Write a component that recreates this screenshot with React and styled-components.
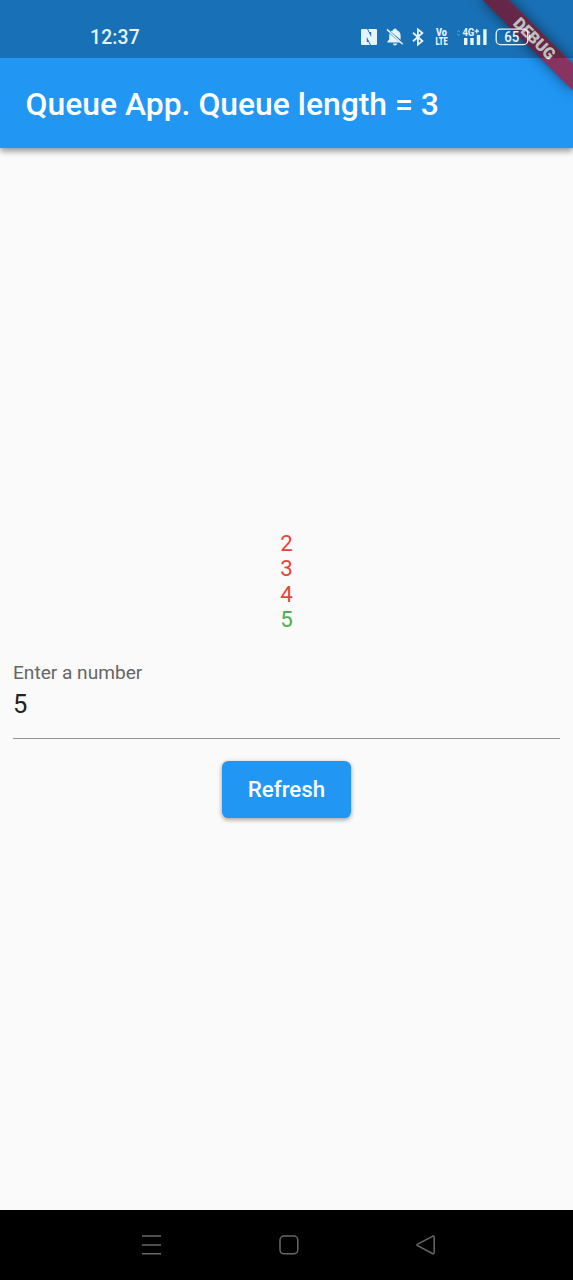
import React from 'react';
import styled, { createGlobalStyle } from 'styled-components';

const GlobalStyle = createGlobalStyle`
  *, *::before, *::after { box-sizing: border-box; }
  body { margin: 0; background: #fafafa; font-family: Roboto, sans-serif; }
`;

const Screen = styled.div`
  position: relative;
  display: flex;
  flex-direction: column;
  width: 573px;
  height: 1280px;
  overflow: hidden;
  background: #fafafa;
`;

const Header = styled.header`
  flex: none;
  background: #2196f3;
  box-shadow: 0 3px 6px rgba(0, 0, 0, 0.22), 0 3px 6px rgba(0, 0, 0, 0.22);
`;

/* The system bar is a translucent scrim above the app, debug banner included. */
const StatusBar = styled.div`
  position: relative;
  z-index: 2;
  display: flex;
  align-items: center;
  justify-content: space-between;
  height: 58px;
  padding: 16px 42px 0 90px;
  background: rgba(0, 0, 0, 0.25);
  color: #e6f5fd;
`;

const Clock = styled.time`
  padding-top: 2px;
  font-family: Roboto, sans-serif;
  font-size: 19.3px;
  font-weight: 500;
  line-height: 22px;
  letter-spacing: 0.2px;
`;

const StatusIcons = styled.div`
  display: flex;
  align-items: center;
`;

const Glyph = styled.svg`
  display: block;
  flex: none;
  margin-left: ${(p) => p.$gap || 0}px;
  overflow: visible;
  fill: currentColor;
`;

const GlyphText = styled.text`
  font-family: Roboto, sans-serif;
  font-size: ${(p) => p.$size}px;
  font-weight: ${(p) => p.$weight || 700};
`;

const TitleBar = styled.div`
  display: flex;
  align-items: center;
  height: 89.5px;
  padding: 2px 25.6px 0;
`;

const Title = styled.h1`
  margin: 0;
  color: #fff;
  font-size: 31.85px;
  font-weight: 500;
  line-height: 38px;
  white-space: nowrap;
`;

const Content = styled.main`
  flex: 1;
  display: flex;
  flex-direction: column;
  align-items: center;
  justify-content: center;
  padding: 0 13px 9px;
`;

const QueueList = styled.ul`
  margin: 0;
  padding: 0;
  list-style: none;
  text-align: center;
`;

const QueueItem = styled.li`
  color: ${(p) => (p.$latest ? '#4caf50' : '#e5443a')};
  font-size: 22.3px;
  line-height: 25.5px;
`;

const Field = styled.label`
  display: flex;
  flex-direction: column;
  width: 100%;
  height: 88px;
  margin-top: 18px;
  padding-top: 10px;
  border-bottom: 1.5px solid #949494;
`;

const FieldLabel = styled.span`
  color: #666;
  font-size: 19.1px;
  line-height: 23px;
`;

const FieldInput = styled.input`
  width: 100%;
  height: 30px;
  margin-top: 5px;
  padding: 0;
  border: 0;
  outline: 0;
  background: transparent;
  color: #212121;
  font: 400 25.5px/30px Roboto, sans-serif;
`;

const RefreshButton = styled.button`
  width: 129px;
  height: 57px;
  margin-top: 22px;
  padding: 0;
  border: 0;
  border-radius: 6.4px;
  background: #2196f3;
  color: #fff;
  box-shadow: 0 2px 4px rgba(0, 0, 0, 0.25), 0 1px 5px rgba(0, 0, 0, 0.15);
  font: 500 22.3px/26px Roboto, sans-serif;
`;

const NavBar = styled.nav`
  flex: none;
  display: flex;
  align-items: center;
  justify-content: space-between;
  height: 70px;
  padding: 0 137px 0 141px;
  background: #000;
`;

const NavGlyph = styled.svg`
  display: block;
  fill: none;
  stroke: #686868;
  stroke-width: 1.5;
  stroke-linejoin: round;
`;

const BannerCorner = styled.div`
  position: absolute;
  z-index: 1;
  top: 0;
  right: 0;
  width: 150px;
  height: 150px;
  overflow: hidden;
  pointer-events: none;
`;

const Banner = styled.div`
  position: absolute;
  top: 44.6px;
  left: 86.3px;
  width: 127.4px;
  height: 19.1px;
  transform: rotate(45deg);
  transform-origin: 63.7px -44.6px;
  background: rgba(172, 18, 45, 0.74);
  box-shadow: 0 0 13px rgba(0, 0, 0, 0.5);
  color: #fff;
  font-size: 16.2px;
  font-weight: 900;
  line-height: 19.1px;
  text-align: center;
`;

const numbers = [2, 3, 4, 5];

function StatusGlyphs() {
  return (
    <StatusIcons>
      <Glyph width="16" height="16" viewBox="0 0 16 16">
        <path
          fillRule="evenodd"
          d="M1 0H6L10.2 8V3H8.4L7.2 0H15Q16 0 16 1V15Q16 16 15 16H10L5.8 8V13H7.6L8.8 16H1Q0 16 0 15V1Q0 0 1 0z"
        />
      </Glyph>
      <Glyph $gap={9} width="18" height="18" viewBox="0 0 18 18">
        <path d="M7.2 2.2a1.8 1.8 0 0 1 3.6 0C13.3 3 14.6 5 14.6 7.5v4.3L4.7 3.6c.7-.7 1.5-1.1 2.5-1.4zM3.3 5.5 14 14.6H1.4v-1.2l1.8-1.9v-4zM7 15.5h4a2 2 0 0 1-4 0z" />
        <path d="M1 1.4 16.7 16.2" fill="none" stroke="currentColor" strokeWidth="1.5" />
      </Glyph>
      <Glyph $gap={8} width="12" height="18" viewBox="0 0 12 18">
        <path
          d="M1 4.8 10.4 13 5.9 16.6V1.4L10.4 5 1 13.2"
          fill="none"
          stroke="currentColor"
          strokeWidth="1.8"
        />
      </Glyph>
      <Glyph $gap={11} width="13" height="18" viewBox="0 0 13 18">
        <GlyphText x="1" y="8" $size={10.3} $weight={900} textLength="11" lengthAdjust="spacingAndGlyphs">Vo</GlyphText>
        <GlyphText x="0.5" y="16.8" $size={10.3} $weight={900} textLength="12" lengthAdjust="spacingAndGlyphs">LTE</GlyphText>
      </Glyph>
      <Glyph $gap={8} width="31" height="18" viewBox="0 0 31 18">
        <path d="M1 4.1 2.5 2.4 4 4.1M1 5.9l1.5 1.7L4 5.9" fill="none" stroke="currentColor" opacity=".3" />
        <GlyphText x="6.4" y="7.6" $size={10.8} textLength="12" lengthAdjust="spacingAndGlyphs">4G</GlyphText>
        <path d="M18.6 2.6h4.4v1.2h-4.4zM20.2 1h1.2v4.4h-1.2z" />
        <path d="M8 10h3.4v7H8zM14.3 10h3.4v7h-3.4zM20.8 7h3.4v10h-3.4zM27.2 1.2h3.4V17h-3.4z" />
      </Glyph>
      <Glyph $gap={8} width="36" height="18" viewBox="0 0 36 18">
        <rect x="1.2" y="1.2" width="31.6" height="15.4" rx="4.2" fill="none" stroke="currentColor" strokeWidth="1.3" />
        <path d="M34 6.3c1.8.6 1.8 4.6 0 5.2z" />
        <GlyphText x="9.2" y="13.9" $size={13.8} $weight={500} textLength="15" lengthAdjust="spacingAndGlyphs">65</GlyphText>
      </Glyph>
    </StatusIcons>
  );
}

export default function App() {
  return (
    <Screen>
      <GlobalStyle />
      <Header>
        <StatusBar>
          <Clock>12:37</Clock>
          <StatusGlyphs />
        </StatusBar>
        <TitleBar>
          <Title>Queue App. Queue length = 3</Title>
        </TitleBar>
      </Header>
      <Content>
        <QueueList>
          {numbers.map((n, i) => (
            <QueueItem key={n} $latest={i === numbers.length - 1}>{n}</QueueItem>
          ))}
        </QueueList>
        <Field>
          <FieldLabel>Enter a number</FieldLabel>
          <FieldInput defaultValue="5" inputMode="numeric" />
        </Field>
        <RefreshButton type="button">Refresh</RefreshButton>
      </Content>
      <NavBar>
        <NavGlyph width="21" height="22" viewBox="0 0 21 22">
          <path d="M1 2h19M1 11h19M1 19.7h19" />
        </NavGlyph>
        <NavGlyph width="20" height="20" viewBox="0 0 20 20">
          <rect x="1" y="1" width="17.8" height="17.8" rx="4" />
        </NavGlyph>
        <NavGlyph width="20" height="20" viewBox="0 0 20 20">
          <path d="M1.6 9.1 16.4 1.3q1.8-.8 1.8 1v15.2q0 1.8-1.8 1L1.6 10.7q-1.4-.8 0-1.6z" />
        </NavGlyph>
      </NavBar>
      <BannerCorner>
        <Banner>DEBUG</Banner>
      </BannerCorner>
    </Screen>
  );
}
